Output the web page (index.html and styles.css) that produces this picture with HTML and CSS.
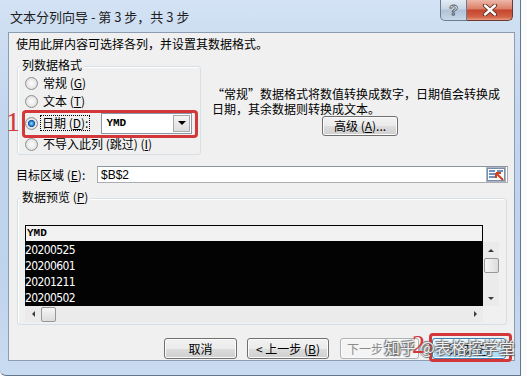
FILE: index.html
```html
<!DOCTYPE html>
<html lang="zh-CN">
<head>
    <meta charset="UTF-8">
    <meta name="viewport" content="width=device-width, initial-scale=1.0">
    <title>文本分列向导 - 第 3 步，共 3 步</title>
    <link rel="stylesheet" href="styles.css">
</head>
<body>
    <div class="window">
        <div class="titlebar">
            <span class="title">文本分列向导 - 第 3 步，共 3 步</span>
            <div class="caption-btns">
                <span class="cap-help">?</span>
                <span class="cap-close">
                    <svg width="16" height="12" viewBox="0 0 16 12">
                        <path d="M3 1.5 L13 10.5 M13 1.5 L3 10.5" stroke="#5a2a22" stroke-width="4.2" stroke-linecap="round"/>
                        <path d="M3 1.5 L13 10.5 M13 1.5 L3 10.5" stroke="#fff" stroke-width="2.4" stroke-linecap="round"/>
                    </svg>
                </span>
            </div>
        </div>

        <div class="content">
            <p class="intro">使用此屏内容可选择各列，并设置其数据格式。</p>

            <div class="format-row">
                <div class="group format-group">
                    <span class="legend">列数据格式</span>
                    <div class="radio-row row-1"><span class="radio"></span>常规 (<u>G</u>)</div>
                    <div class="radio-row"><span class="radio"></span>文本 (<u>T</u>)</div>
                    <div class="radio-row date-row">
                        <span class="radio checked"></span>
                        <span class="focus-label">日期 (<u>D</u>):</span>
                        <div class="combo">
                            <span class="combo-text">YMD</span>
                            <span class="combo-btn"></span>
                        </div>
                    </div>
                    <div class="radio-row last-row"><span class="radio"></span>不导入此列 (跳过) (<u>I</u>)</div>
                </div>

                <div class="desc">
                    <p>“常规”数据格式将数值转换成数字，日期值会转换成<br>日期，其余数据则转换成文本。</p>
                    <button class="btn btn-adv">高级 (<u>A</u>)...</button>
                </div>
            </div>

            <div class="target-row">
                <span class="target-label">目标区域 (<u>E</u>):</span>
                <div class="target-input">
                    <span>$B$2</span>
                    <span class="ref-btn">
                        <svg width="18" height="13" viewBox="0 0 18 13">
                            <rect x="0.5" y="0.5" width="17" height="12" fill="#fdfdfd" stroke="#7b8ea6"/>
                            <path d="M2 3h6M2 6h6M2 9h6M10 3h6" stroke="#3e6db0" stroke-width="1.4"/>
                            <path d="M9 5 L16 12 M9 5 L9 10 M9 5 L14 5" stroke="#d2401f" stroke-width="2"/>
                        </svg>
                    </span>
                </div>
            </div>

            <div class="group preview-group">
                <span class="legend">数据预览 (<u>P</u>)</span>
                <div class="preview">
                    <div class="pv-head">YMD</div>
                    <div class="pv-corner-top"></div>
                    <div class="pv-body">
                        <div>20200525</div>
                        <div>20200601</div>
                        <div>20201211</div>
                        <div>20200502</div>
                    </div>
                    <div class="vscroll">
                        <span class="arrow arrow-up"></span>
                        <span class="thumb"></span>
                        <span class="spacer"></span>
                        <span class="arrow arrow-down"></span>
                    </div>
                    <div class="hscroll">
                        <span class="arrow arrow-left"></span>
                        <span class="thumb"></span>
                        <span class="spacer"></span>
                        <span class="arrow arrow-right"></span>
                    </div>
                    <div class="pv-corner"></div>
                </div>
            </div>

            <div class="btn-row">
                <button class="btn btn-cancel">取消</button>
                <button class="btn btn-back">&lt; 上一步 (<u>B</u>)</button>
                <button class="btn btn-next">下一步 (<u>N</u>) &gt;</button>
                <button class="btn btn-finish">完成 (<u>F</u>)</button>
            </div>
        </div>
    </div>

    <!-- 标注 -->
    <div class="callout callout-1"></div>
    <div class="callout callout-2"></div>
    <span class="mark mark-1">1</span>
    <span class="watermark">知乎 @表格控学堂</span>
    <span class="mark mark-2">2</span>
</body>
</html>
```

FILE: styles.css
```css
* {
    box-sizing: border-box;
}
body {
    margin: 0;
    width: 527px;
    height: 376px;
    overflow: hidden;
    position: relative;
    background: #fbfbfb;
    font-family: "Noto Sans CJK SC", sans-serif;
    font-size: 12px;
    color: #000;
}
u {
    text-decoration: underline;
}
.window {
    width: 521px;
    height: 376px;
    padding: 0 5px 14px 8px;
    display: flex;
    flex-direction: column;
    background: linear-gradient(#d3e2f4, #c2d6ee 30%, #bed3ec 70%, #c9dbf0);
    border-right: 1px solid #64768c;
    border-bottom: 1px solid #64768c;
    border-bottom-left-radius: 6px;
}
.titlebar {
    height: 32px;
    display: flex;
    align-items: flex-start;
    flex: none;
}
.title {
    margin: 9px 0 0 2px;
    font-size: 13px;
    line-height: 16px;
    color: #1e1e1e;
}
.caption-btns {
    margin-left: auto;
    margin-right: 2px;
    display: flex;
}
.cap-help {
    width: 27px;
    height: 21px;
    border: 1px solid #6a7c94;
    border-top: none;
    border-radius: 0 0 0 5px;
    background: linear-gradient(#e3ebf5, #c9d6e6 45%, #b1c2d8 50%, #c8d7e9);
    text-align: center;
    font-family: "Liberation Sans", sans-serif;
    font-weight: bold;
    font-size: 15px;
    line-height: 20px;
    color: #f4f4f4;
    -webkit-text-stroke: 0.8px #4b5560;
}
.cap-close {
    width: 46px;
    height: 21px;
    border: 1px solid #6b3a33;
    border-top: none;
    border-left: none;
    border-radius: 0 0 5px 0;
    background: linear-gradient(#ecb8a8, #dc7d66 45%, #c5442c 50%, #d26347 85%, #e69b7f);
    display: flex;
    align-items: center;
    justify-content: center;
}
.content {
    flex: 1;
    border: 1px solid #8c9db3;
    background: #f0f0f0;
    display: flex;
    flex-direction: column;
}
.intro {
    margin: 3px 0 0 7px;
    line-height: 16px;
}
.format-row {
    display: flex;
}
.group {
    border: 1px solid #d5dfe5;
    border-radius: 3px;
    box-shadow: inset 1px 1px 0 #fff;
    padding-left: 7px;
}
.legend {
    display: block;
    width: fit-content;
    margin: -10px 0 0 -5px;
    padding: 0 2px;
    line-height: 16px;
    background: #f0f0f0;
}
.format-group {
    margin: 14px 0 0 8px;
    width: 184px;
    height: 89px;
}
.radio-row {
    display: flex;
    align-items: center;
    height: 18px;
    line-height: 16px;
}
.row-1 {
    margin-top: 1px;
}
.date-row {
    margin-top: 2px;
    height: 22px;
}
.last-row {
    height: 20px;
}
.radio {
    width: 13px;
    height: 13px;
    margin-right: 5px;
    border-radius: 50%;
    border: 1px solid #8e8f8f;
    background: radial-gradient(circle, #fdfdfd 0, #e9e9e9 55%, #cfcfcf 100%);
    flex: none;
}
.radio.checked {
    background: radial-gradient(circle, #9ad7ff 0, #2f86d6 28%, #0f4f9c 42%, #e9e9e9 50%, #cfcfcf 100%);
}
.focus-label {
    margin-left: -3px;
    padding: 0 1px;
    border: 1px dotted #000;
    line-height: 14px;
}
.combo {
    margin-left: 11px;
    width: 91px;
    height: 21px;
    border: 1px solid #8a96a4;
    background: #fff;
    display: flex;
    align-items: center;
}
.combo-text {
    padding-left: 4px;
    font-family: "Liberation Mono", monospace;
    font-weight: bold;
    font-size: 11px;
}
.combo-btn {
    margin-left: auto;
    margin-right: 1px;
    width: 17px;
    height: 17px;
    border: 1px solid #a9a9a9;
    background: linear-gradient(#f4f4f4, #dedede);
    display: flex;
    align-items: center;
    justify-content: center;
}
.combo-btn::before {
    content: "";
    border-left: 4px solid transparent;
    border-right: 4px solid transparent;
    border-top: 4px solid #000;
}
.desc {
    margin: 34px 0 0 11px;
}
.desc p {
    margin: 0;
    line-height: 15px;
    white-space: nowrap;
}
.btn {
    height: 21px;
    padding: 0;
    border: 1px solid #707070;
    border-radius: 3px;
    background: linear-gradient(#f2f2f2 0%, #ebebeb 50%, #dddddd 50%, #cfcfcf 100%);
    box-shadow: inset 0 0 0 1px #fbfbfb;
    font-family: "Noto Sans CJK SC", sans-serif;
    font-size: 12px;
    line-height: 18px;
    color: #000;
    flex: none;
}
.btn-adv {
    display: block;
    margin-left: 110px;
    width: 76px;
    height: 20px;
}
.target-row {
    margin-top: 11px;
    height: 17px;
    padding-left: 7px;
    display: flex;
    align-items: center;
    line-height: 16px;
}
.target-label {
    width: 81px;
    flex: none;
}
.target-input {
    width: 411px;
    height: 17px;
    border: 1px solid #abadb3;
    border-top-color: #8e949c;
    background: #fff;
    display: flex;
    align-items: center;
    padding-left: 3px;
    font-family: "Liberation Sans", sans-serif;
    font-size: 12px;
}
.ref-btn {
    margin-left: auto;
    margin-right: 1px;
    width: 20px;
    height: 15px;
    border: 1px solid #a8b4c4;
    background: linear-gradient(#f7f9fc, #dfe6ef);
    display: flex;
    align-items: center;
    justify-content: center;
}
.preview-group {
    margin: 15px 0 0 8px;
    width: 490px;
    height: 127px;
}
.preview {
    margin-top: 20px;
    display: grid;
    grid-template-columns: 458px 16px;
    grid-template-rows: 17px 64px 16px;
}
.pv-head {
    border: 1px solid #000;
    background: #f2f2f2;
    padding-left: 1px;
    font-family: "Liberation Mono", monospace;
    font-weight: bold;
    font-size: 11px;
    line-height: 15px;
}
.pv-body {
    background: #030303;
    color: #fff;
    font-family: "DejaVu Sans Condensed", "Liberation Sans Narrow", sans-serif;
    font-size: 12px;
    letter-spacing: -0.6px;
    line-height: 16px;
}
.vscroll,
.hscroll {
    background: #ebebeb;
    display: flex;
    align-items: center;
}
.vscroll {
    flex-direction: column;
}
.spacer {
    flex: 1;
}
.arrow {
    width: 16px;
    height: 16px;
    display: flex;
    align-items: center;
    justify-content: center;
    flex: none;
}
.arrow::before {
    content: "";
}
.arrow-up::before {
    border-left: 3px solid transparent;
    border-right: 3px solid transparent;
    border-bottom: 3px solid #3c3c3c;
}
.arrow-down::before {
    border-left: 3px solid transparent;
    border-right: 3px solid transparent;
    border-top: 3px solid #3c3c3c;
}
.arrow-left::before {
    border-top: 3px solid transparent;
    border-bottom: 3px solid transparent;
    border-right: 3px solid #3c3c3c;
}
.arrow-right::before {
    border-top: 3px solid transparent;
    border-bottom: 3px solid transparent;
    border-left: 3px solid #3c3c3c;
}
.thumb {
    width: 15px;
    height: 15px;
    border: 1px solid #979797;
    border-radius: 2px;
    background: linear-gradient(90deg, #f6f6f6, #dcdcdc);
    flex: none;
}
.hscroll .thumb {
    background: linear-gradient(#f6f6f6, #dcdcdc);
}
.pv-corner {
    background: #f0f0f0;
}
.btn-row {
    margin-top: 13px;
    padding-right: 8px;
    display: flex;
    justify-content: flex-end;
}
.btn-cancel {
    width: 73px;
    margin-right: 10px;
}
.btn-back {
    width: 82px;
    margin-right: 11px;
}
.btn-next {
    width: 79px;
    margin-right: 13px;
    border-color: #adb2b5;
    background: #f4f4f4;
    color: #8b8b8b;
}
.btn-finish {
    width: 74px;
    border-color: #3c7fb1;
    background: linear-gradient(#eaf6fd 0%, #d9f0fc 50%, #bee6fd 50%, #a7d9f5 100%);
}
.callout {
    position: absolute;
    border: 3px solid #d3373a;
    border-radius: 4px;
}
.callout-1 {
    left: 22px;
    top: 110px;
    width: 176px;
    height: 28px;
}
.callout-2 {
    left: 429px;
    top: 333px;
    width: 83px;
    height: 29px;
}
.mark {
    position: absolute;
    font-family: "Liberation Serif", serif;
    font-size: 28px;
    line-height: 28px;
    color: #d3373a;
}
.mark-1 {
    left: 6px;
    top: 108px;
}
.mark-2 {
    left: 412px;
    top: 331px;
    font-size: 26px;
}
.watermark {
    position: absolute;
    left: 384px;
    top: 337px;
    font-size: 16px;
    line-height: 20px;
    color: rgba(255, 255, 255, 0.92);
    text-shadow: 0 0 1px #555, 1px 1px 1px #666, -1px -1px 1px #777;
    white-space: nowrap;
}
```
